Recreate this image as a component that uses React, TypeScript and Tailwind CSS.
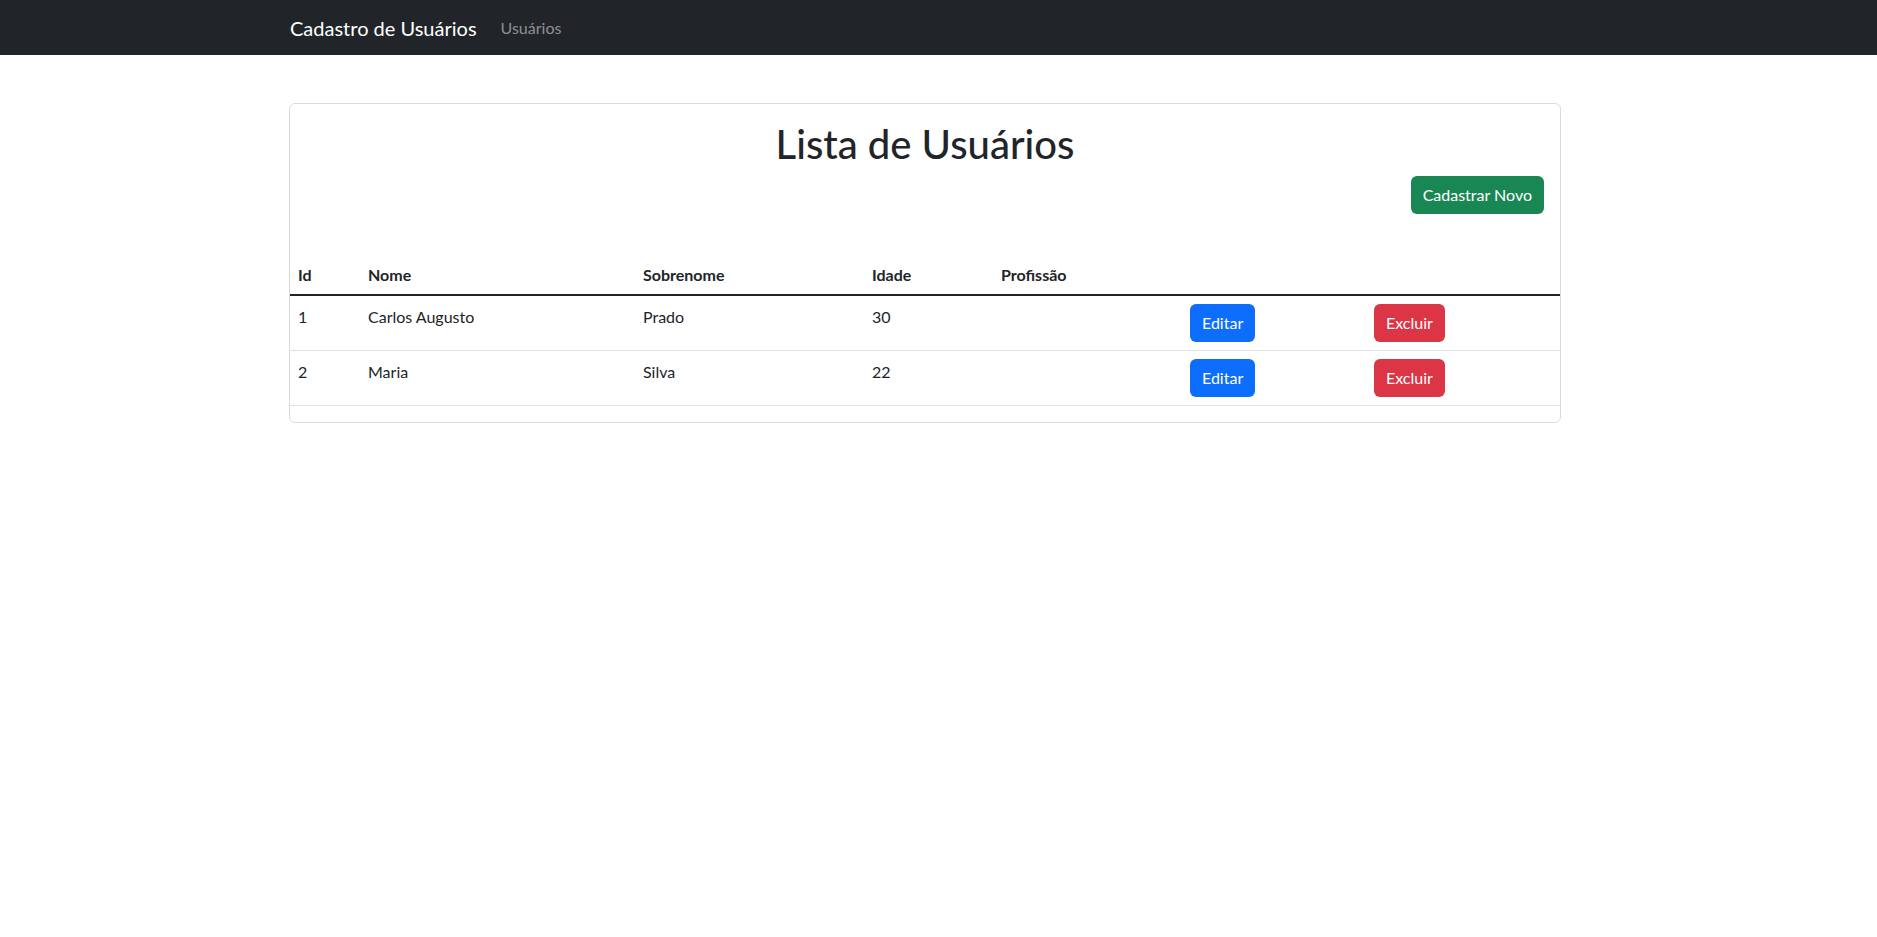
import React from "react";

const rows = [
  { id: 1, nome: "Carlos Augusto", sobrenome: "Prado", idade: 30, profissao: "" },
  { id: 2, nome: "Maria", sobrenome: "Silva", idade: 22, profissao: "" },
];

const cols = "grid grid-cols-[70px_275px_229px_129px_189px_184px_1fr]";

export default function App() {
  return (
    <div className="min-h-screen bg-white text-[#212529] font-['Segoe_UI','Lato',sans-serif] text-[16px] leading-[24px]">
      <nav className="h-[55px] bg-[#212529] flex items-center">
        <div className="ml-[290px] flex items-center">
          <span className="text-[20px] leading-[30px] text-white">Cadastro de Usuários</span>
          <span className="ml-[24px] text-[16px] text-[#8e9093]">Usuários</span>
        </div>
      </nav>

      <div className="mt-[48px] ml-[289px] w-[1272px] border border-[#dcdcdc] rounded-[6px] pt-[16px] pb-[16px]">
        <h1 className="text-center text-[40px] leading-[48px] font-medium">Lista de Usuários</h1>
        <div className="mt-[8px] flex justify-end pr-[16px]">
          <button className="h-[38px] px-[12px] rounded-[6px] bg-[#198754] text-white text-[16px]">
            Cadastrar Novo
          </button>
        </div>

        <div className="mt-[40px]">
          <div className={`${cols} border-b-2 border-[#212529] font-bold`}>
            <div className="pt-[9px] pb-[7px] px-[8px]">Id</div>
            <div className="pt-[9px] pb-[7px] px-[8px]">Nome</div>
            <div className="pt-[9px] pb-[7px] px-[8px]">Sobrenome</div>
            <div className="pt-[9px] pb-[7px] px-[8px]">Idade</div>
            <div className="pt-[9px] pb-[7px] px-[8px]">Profissão</div>
            <div className="pt-[9px] pb-[7px] px-[8px]"></div>
            <div className="pt-[9px] pb-[7px] px-[8px]"></div>
          </div>
          {rows.map((r) => (
            <div key={r.id} className={`${cols} border-b border-[#dee2e6]`}>
              <div className="pt-[9px] px-[8px]">{r.id}</div>
              <div className="pt-[9px] px-[8px]">{r.nome}</div>
              <div className="pt-[9px] px-[8px]">{r.sobrenome}</div>
              <div className="pt-[9px] px-[8px]">{r.idade}</div>
              <div className="pt-[9px] px-[8px]">{r.profissao}</div>
              <div className="p-[8px]">
                <button className="h-[38px] px-[12px] rounded-[6px] bg-[#0d6efd] text-white">Editar</button>
              </div>
              <div className="p-[8px]">
                <button className="h-[38px] px-[12px] rounded-[6px] bg-[#dc3545] text-white">Excluir</button>
              </div>
            </div>
          ))}
        </div>
      </div>
    </div>
  );
}
